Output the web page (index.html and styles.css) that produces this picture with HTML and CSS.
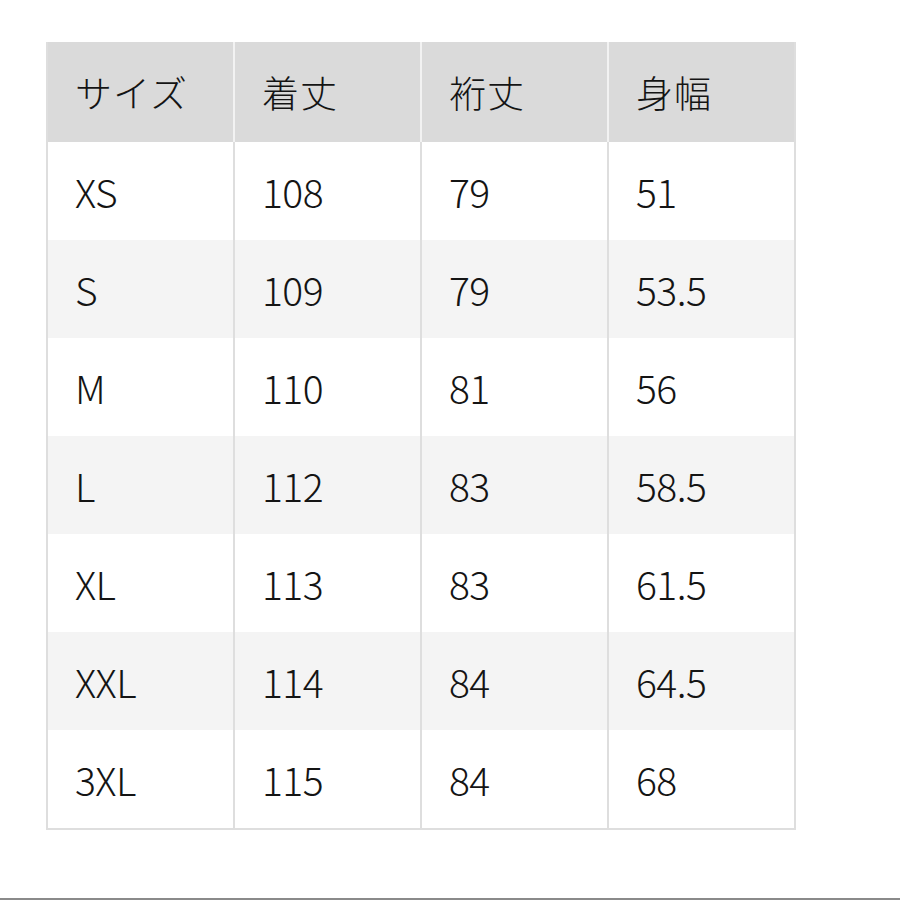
FILE: index.html
```html
<!DOCTYPE html>
<html lang="ja">
<head>
<meta charset="utf-8">
<link rel="stylesheet" href="styles.css">
</head>
<body>
<div class="page">
  <table class="sizes">
    <thead>
      <tr><th>サイズ</th><th>着丈</th><th>裄丈</th><th>身幅</th></tr>
    </thead>
    <tbody>
      <tr><td>XS</td><td>108</td><td>79</td><td>51</td></tr>
      <tr><td>S</td><td>109</td><td>79</td><td>53.5</td></tr>
      <tr><td>M</td><td>110</td><td>81</td><td>56</td></tr>
      <tr><td>L</td><td>112</td><td>83</td><td>58.5</td></tr>
      <tr><td>XL</td><td>113</td><td>83</td><td>61.5</td></tr>
      <tr><td>XXL</td><td>114</td><td>84</td><td>64.5</td></tr>
      <tr><td>3XL</td><td>115</td><td>84</td><td>68</td></tr>
    </tbody>
  </table>
  <div class="rule"></div>
</div>
</body>
</html>
```
FILE: styles.css
```css
html, body {
  margin: 0;
  padding: 0;
  background: #ffffff;
}
.page {
  height: 900px;
  display: flex;
  flex-direction: column;
  align-items: flex-start;
  font-family: "Noto Sans CJK JP", "Noto Sans", sans-serif;
  color: #141414;
}
.sizes {
  margin: 42px 0 0 46px;
  width: 750px;
  table-layout: fixed;
  border-collapse: collapse;
  border: 2px solid #dedede;
  border-top: none;
}
.sizes th,
.sizes td {
  padding: 0 0 0 27px;
  border-left: 2px solid #dedede;
  text-align: left;
  vertical-align: middle;
  font-weight: 300;
}
.sizes th {
  height: 100px;
  background: #dadada;
  border-left-color: #f2f2f2;
  font-size: 37px;
  letter-spacing: 1px;
}
.sizes th:first-child {
  border-left-color: #dedede;
}
.sizes td {
  height: 98px;
  font-size: 39px;
  letter-spacing: -0.5px;
}
.sizes tbody tr:nth-child(even) td {
  background: #f4f4f4;
}
.sizes tbody tr:nth-child(odd) td {
  background: #ffffff;
}
.rule {
  margin-top: auto;
  align-self: stretch;
  height: 2px;
  background: #8a8a8a;
}
```
